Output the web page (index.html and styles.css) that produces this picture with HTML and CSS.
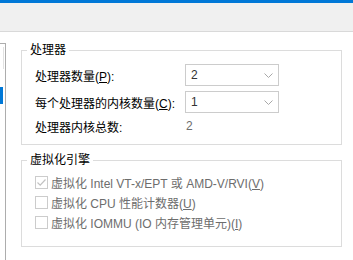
FILE: index.html
```html
<!DOCTYPE html>
<html lang="zh-CN">

<head>
    <meta charset="UTF-8">
    <title>处理器</title>
    <link rel="stylesheet" href="styles.css">
</head>

<body>
    <div class="accent_bar"></div>
    <div class="tool_strip"></div>

    <div class="main">
        <div class="side_list">
            <div class="side_scroll"></div>
            <div class="side_selected"></div>
        </div>

        <div class="pane">
            <fieldset class="group group_cpu">
                <legend>处理器</legend>
                <div class="form_row">
                    <span class="label">处理器数量(<u>P</u>):</span>
                    <div class="combo">
                        <span>2</span>
                        <svg width="9" height="5" viewBox="0 0 9 5"><path d="M0.5 0.5 L4.5 4.5 L8.5 0.5" fill="none" stroke="#a8a8a8" stroke-width="1"/></svg>
                    </div>
                </div>
                <div class="form_row">
                    <span class="label">每个处理器的内核数量(<u>C</u>):</span>
                    <div class="combo">
                        <span>1</span>
                        <svg width="9" height="5" viewBox="0 0 9 5"><path d="M0.5 0.5 L4.5 4.5 L8.5 0.5" fill="none" stroke="#a8a8a8" stroke-width="1"/></svg>
                    </div>
                </div>
                <div class="form_row short_row">
                    <span class="label">处理器内核总数:</span>
                    <span class="value">2</span>
                </div>
            </fieldset>

            <fieldset class="group group_virt">
                <legend>虚拟化引擎</legend>
                <div class="check_row">
                    <span class="check">
                        <svg width="11" height="11" viewBox="0 0 11 11"><path d="M1.5 5.5 L4.2 8.2 L9.5 2.5" fill="none" stroke="#c2c2c2" stroke-width="1.2"/></svg>
                    </span>
                    <span>虚拟化 Intel VT-x/EPT 或 AMD-V/RVI(<u>V</u>)</span>
                </div>
                <div class="check_row">
                    <span class="check"></span>
                    <span>虚拟化 CPU 性能计数器(<u>U</u>)</span>
                </div>
                <div class="check_row">
                    <span class="check"></span>
                    <span>虚拟化 IOMMU (IO 内存管理单元)(<u>I</u>)</span>
                </div>
            </fieldset>
        </div>
    </div>
</body>

</html>
```

FILE: styles.css
```css
body {
    margin: 0;
    width: 353px;
    height: 260px;
    overflow: hidden;
    background: #fff;
    font-family: "Liberation Sans", "Noto Sans CJK SC", sans-serif;
    font-size: 12px;
    color: #000;
}

.accent_bar {
    height: 3px;
    background: #0078d7;
}

.tool_strip {
    height: 28px;
    background: #f0f0f0;
    border-bottom: 1px solid #d9d9d9;
}

.main {
    display: flex;
    height: 228px;
}

/* list on the left, mostly cut off */
.side_list {
    width: 5px;
    margin-top: 11px;
    border-top: 1px solid #adadad;
    border-right: 1px solid #adadad;
}

.side_scroll {
    margin: 3px 0 0 3px;
    width: 1px;
    height: 22px;
    background: #e2e2e2;
}

.side_selected {
    margin-top: 18px;
    width: 3px;
    height: 17px;
    background: #0078d7;
}

.pane {
    margin-left: 15px;
    width: 321px;
    padding-top: 10px;
}

.group {
    margin: 0;
    padding: 0 0 0 13px;
    border: 1px solid #dcdcdc;
}

.group legend {
    margin-left: -8px;
    padding: 0 3px;
    line-height: 16px;
}

.group_cpu {
    padding-top: 6px;
    padding-bottom: 10px;
}

.form_row {
    display: flex;
    align-items: center;
    height: 22px;
    margin-bottom: 5px;
}

.short_row {
    height: 16px;
    margin-bottom: 0;
}

.label {
    width: 150px;
}

.combo {
    width: 82px;
    height: 20px;
    border: 1px solid #cccccc;
    display: flex;
    align-items: center;
    justify-content: space-between;
    padding: 0 5px;
    color: #333;
}

.value {
    color: #6d6d6d;
    padding-left: 1px;
}

.group_virt {
    margin-top: 7px;
    padding-top: 4px;
    padding-bottom: 14px;
    color: #6d6d6d;
}

.group_virt legend {
    color: #000;
}

.check_row {
    display: flex;
    align-items: center;
    height: 20px;
}

.check {
    width: 11px;
    height: 11px;
    border: 1px solid #cccccc;
    margin-right: 3px;
    display: flex;
}
```
